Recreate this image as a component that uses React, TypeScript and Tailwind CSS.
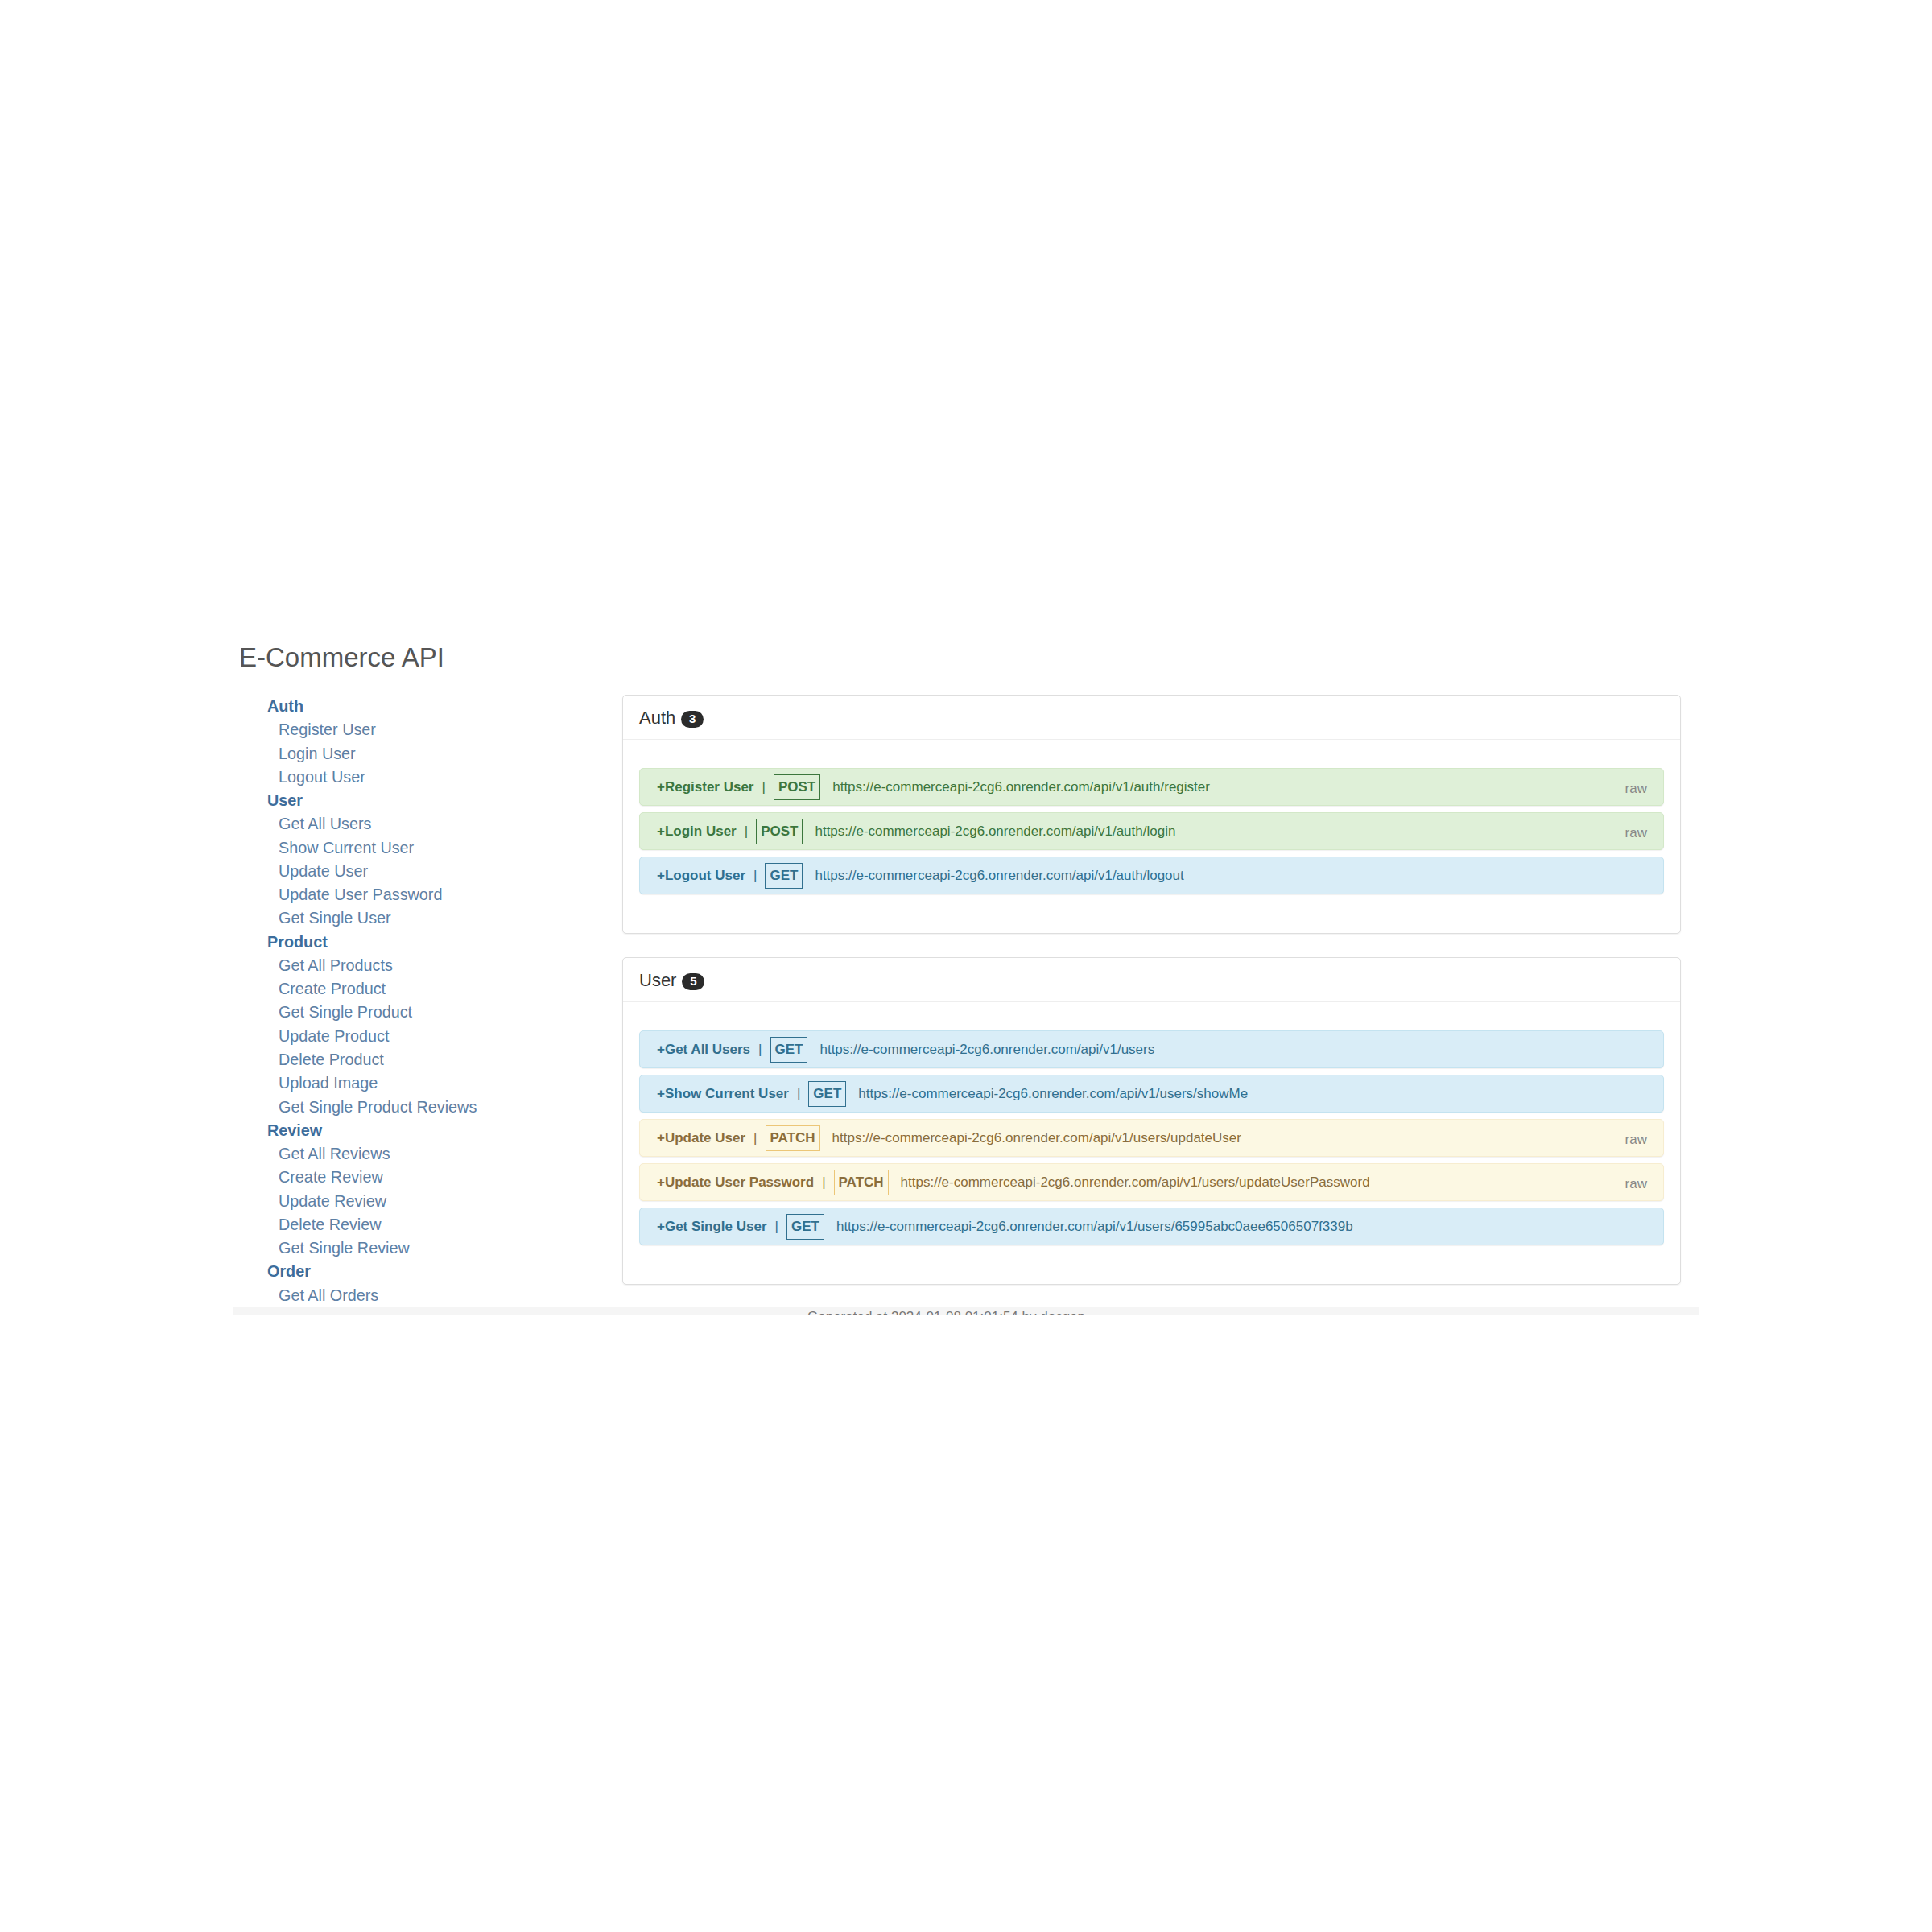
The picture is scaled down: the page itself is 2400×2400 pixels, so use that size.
type Method = "GET" | "POST" | "PATCH";

type Endpoint = { name: string; method: Method; path: string; raw?: boolean };

const BASE = "https://e-commerceapi-2cg6.onrender.com/api/v1";

const SIDEBAR: { title: string; items: string[] }[] = [
  { title: "Auth", items: ["Register User", "Login User", "Logout User"] },
  {
    title: "User",
    items: ["Get All Users", "Show Current User", "Update User", "Update User Password", "Get Single User"],
  },
  {
    title: "Product",
    items: [
      "Get All Products",
      "Create Product",
      "Get Single Product",
      "Update Product",
      "Delete Product",
      "Upload Image",
      "Get Single Product Reviews",
    ],
  },
  {
    title: "Review",
    items: ["Get All Reviews", "Create Review", "Update Review", "Delete Review", "Get Single Review"],
  },
  { title: "Order", items: ["Get All Orders"] },
];

const GROUPS: { title: string; endpoints: Endpoint[] }[] = [
  {
    title: "Auth",
    endpoints: [
      { name: "Register User", method: "POST", path: "/auth/register", raw: true },
      { name: "Login User", method: "POST", path: "/auth/login", raw: true },
      { name: "Logout User", method: "GET", path: "/auth/logout" },
    ],
  },
  {
    title: "User",
    endpoints: [
      { name: "Get All Users", method: "GET", path: "/users" },
      { name: "Show Current User", method: "GET", path: "/users/showMe" },
      { name: "Update User", method: "PATCH", path: "/users/updateUser", raw: true },
      { name: "Update User Password", method: "PATCH", path: "/users/updateUserPassword", raw: true },
      { name: "Get Single User", method: "GET", path: "/users/65995abc0aee6506507f339b" },
    ],
  },
];

// alert-ish colours per method
const TONES: Record<Method, { row: string; box: string }> = {
  POST: { row: "bg-[#dff0d8] border-[#d3e8c8] text-[#3c763d]", box: "border-[#3c763d]" },
  GET: { row: "bg-[#d9edf7] border-[#c4e3f0] text-[#31708f]", box: "border-[#31708f]" },
  PATCH: { row: "bg-[#fcf8e3] border-[#f7edd0] text-[#8a6d3b]", box: "border-[#ecc677]" },
};

function EndpointRow({ ep }: { ep: Endpoint }) {
  const tone = TONES[ep.method];
  return (
    <div
      className={`flex h-[47px] items-center rounded-[5px] border pl-[21px] pr-[20px] text-[17px] shadow-[0_1px_1px_rgba(0,0,0,0.06)] ${tone.row}`}
    >
      <span className="font-bold">+{ep.name}</span>
      <span className="ml-[10px]">|</span>
      <span className={`ml-[10px] flex h-[32px] items-center border px-[5px] font-bold ${tone.box}`}>
        {ep.method}
      </span>
      <span className="ml-[15px]">
        {BASE}
        {ep.path}
      </span>
      {ep.raw && <span className="ml-auto mt-[4px] text-[#888]">raw</span>}
    </div>
  );
}

function Panel({ title, endpoints }: { title: string; endpoints: Endpoint[] }) {
  return (
    <section className="rounded-[5px] border border-[#dedede] bg-white shadow-[0_1px_2px_rgba(0,0,0,0.06)]">
      {/* heading */}
      <div className="flex h-[55px] items-center border-b border-[#eeeeee] px-[20px]">
        <span className="text-[22px] text-[#333]">{title}</span>
        <span className="ml-[7px] mt-[5px] flex h-[21px] min-w-[28px] items-center justify-center rounded-full bg-[#2b2b2b] px-[8px] text-[15px] font-bold text-white">
          {endpoints.length}
        </span>
      </div>

      {/* body */}
      <div className="flex flex-col gap-[8px] px-[20px] pb-[48px] pt-[35px]">
        {endpoints.map((ep) => (
          <EndpointRow key={ep.name} ep={ep} />
        ))}
      </div>
    </section>
  );
}

export default function App() {
  return (
    <div className="h-[2400px] w-[2400px] bg-white font-['Liberation_Sans',Arial,sans-serif]">
      <div className="ml-[290px] w-[1820px] pt-[799px]">
        {/* page clipped like the source capture */}
        <div className="h-[835px] overflow-hidden">
          <h3 className="pl-[7px] text-[33px] leading-[36px] text-[#555]">E-Commerce API</h3>

          <div className="mt-[28px] flex">
            {/* Sidebar */}
            <nav className="h-[761px] w-[483px] shrink-0 text-[19.8px] leading-[29.27px]">
              {SIDEBAR.map((s) => (
                <div key={s.title}>
                  <div className="pl-[42px] font-bold text-[#3d6d9c]">{s.title}</div>
                  {s.items.map((it) => (
                    <div key={it} className="pl-[56px] text-[#5d80a5]">
                      {it}
                    </div>
                  ))}
                </div>
              ))}
            </nav>

            {/* Panels */}
            <div className="flex w-[1315px] flex-col gap-[29px]">
              {GROUPS.map((g) => (
                <Panel key={g.title} title={g.title} endpoints={g.endpoints} />
              ))}
            </div>
          </div>

          {/* Footer */}
          <footer className="h-[60px] bg-[#f5f5f5] pl-[713px] pt-[2px] text-[17px] leading-[20px] text-[#777]">
            Generated at 2024-01-08 01:01:54 by docgen
          </footer>
        </div>
      </div>
    </div>
  );
}
